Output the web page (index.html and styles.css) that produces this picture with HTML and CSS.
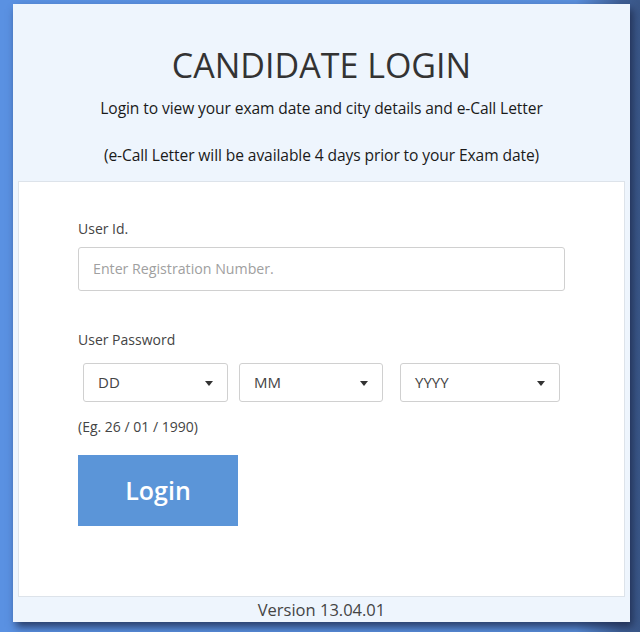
FILE: index.html
```html
<!DOCTYPE html>
<html>
<head>
<meta charset="utf-8">
<link rel="stylesheet" href="styles.css">
</head>
<body>
<div class="panel">
  <div class="header">
    <h1 class="title">CANDIDATE LOGIN</h1>
    <p class="sub">Login to view your exam date and city details and e-Call Letter</p>
    <p class="sub sub2">(e-Call Letter will be available 4 days prior to your Exam date)</p>
  </div>
  <div class="body">
    <div class="label">User Id.</div>
    <div class="input">Enter Registration Number.</div>
    <div class="label label-pw">User Password</div>
    <div class="selects">
      <div class="select sel-dd">DD<span class="caret"></span></div>
      <div class="select sel-mm">MM<span class="caret"></span></div>
      <div class="select sel-yy">YYYY<span class="caret"></span></div>
    </div>
    <div class="hint">(Eg. 26 / 01 / 1990)</div>
    <div class="btn">Login</div>
  </div>
  <div class="footer">Version 13.04.01</div>
</div>
</body>
</html>
```

FILE: styles.css
```css
html, body {
  margin: 0;
  padding: 0;
}
body {
  width: 640px;
  height: 632px;
  overflow: hidden;
  background: linear-gradient(to right, #5a91e2 0%, #5a8fdc 90%, #3f5f95 97%, #3a5788 100%);
  font-family: "Open Sans", "DejaVu Sans", sans-serif;
  color: #333;
}
.panel {
  margin: 4px 0 0 13px;
  width: 617px;
  height: 618px;
  background: #eef5fd;
  box-shadow: 3px 5px 8px rgba(25, 35, 65, 0.75);
  display: flex;
  flex-direction: column;
}
.header {
  height: 177px;
  text-align: center;
  box-sizing: border-box;
  padding-top: 41px;
}
.title {
  margin: 0;
  font-size: 34px;
  font-weight: 400;
  line-height: 40px;
  color: #333;
}
.sub {
  margin: 13px 0 0;
  font-size: 15.6px;
  line-height: 20px;
  color: #1a1a1a;
  letter-spacing: -0.1px;
}
.sub2 {
  margin-top: 27px;
}
.body {
  margin: 0 5px;
  height: 417px;
  background: #fff;
  border: 1px solid #dde3ea;
  box-sizing: border-box;
  padding: 37px 0 0 59px;
}
.label {
  font-size: 14px;
  line-height: 20px;
  color: #444;
}
.input {
  margin-top: 8px;
  width: 487px;
  height: 44px;
  box-sizing: border-box;
  border: 1px solid #d0d0d0;
  border-radius: 3px;
  padding-left: 14px;
  font-size: 14.2px;
  line-height: 42px;
  color: #a0a0a0;
}
.label-pw {
  margin-top: 39px;
}
.selects {
  margin: 13px 0 0 5px;
  display: flex;
}
.select {
  position: relative;
  height: 39px;
  box-sizing: border-box;
  border: 1px solid #d0d0d0;
  border-radius: 3px;
  padding-left: 14px;
  font-size: 15px;
  line-height: 37px;
  color: #444;
}
.sel-dd { width: 145px; }
.sel-mm { width: 144px; margin-left: 11px; }
.sel-yy { width: 160px; margin-left: 17px; }
.caret {
  position: absolute;
  right: 14px;
  top: 17px;
  width: 0;
  height: 0;
  border-left: 4px solid transparent;
  border-right: 4px solid transparent;
  border-top: 5px solid #333;
}
.hint {
  margin-top: 15px;
  font-size: 14px;
  line-height: 20px;
  color: #444;
}
.btn {
  margin-top: 18px;
  width: 160px;
  height: 71px;
  background: #5b95d8;
  color: #fff;
  font-size: 25px;
  font-weight: 600;
  text-align: center;
  line-height: 71px;
}
.footer {
  flex: 1;
  text-align: center;
  font-size: 16.5px;
  line-height: 25px;
  color: #444;
}
```
